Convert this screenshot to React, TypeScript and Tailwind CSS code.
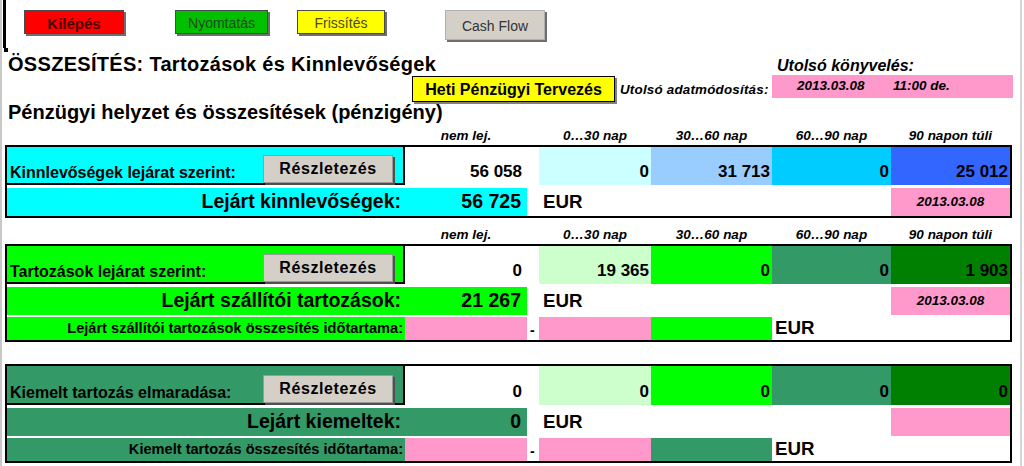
import React from 'react'

type Cell = { bg: string; v: string }

type SectionProps = {
    labelBg: string
    title: string
    nem: string
    cells: Cell[]
    totalLabel: string
    total: string
    date?: string
    period?: { label: string; bg: string }
    firstRowH: string
}

const widths = ['w-[112px]', 'w-[121px]', 'w-[119px]', 'w-[119px]']

function TopButton({ label, className, textClass }: { label: string; className: string; textClass: string }) {
    return (
        <div className={`flex items-center justify-center border border-[#4a4a4a] shadow-[2px_2px_0_#6e6e6e] ${className}`}>
            <span className={`pt-[2px] leading-none ${textClass}`}>{label}</span>
        </div>
    )
}

function DetailButton() {
    return (
        <div className="ml-auto mr-[10px] flex h-[28px] w-[130px] shrink-0 items-center justify-center border border-[#9a9a9a] bg-[#d4d0c8] shadow-[2px_2px_0_#505050]">
            <span className="text-[16px] font-bold leading-none tracking-[0.6px]">Részletezés</span>
        </div>
    )
}

function HeaderRow({ className }: { className: string }) {
    const heads = ['0…30 nap', '30…60 nap', '60…90 nap', '90 napon túli']
    return (
        <div className={`flex text-[13.5px] font-bold italic leading-[14px] ${className}`}>
            <div className="w-[405px] shrink-0" />
            <div className="w-[122px] shrink-0 text-center">nem lej.</div>
            <div className="w-[12px] shrink-0" />
            {heads.map((h, i) => (
                <div key={h} className={`${widths[i]} shrink-0 text-center`}>{h}</div>
            ))}
        </div>
    )
}

function Section({ labelBg, title, nem, cells, totalLabel, total, date, period, firstRowH }: SectionProps) {
    return (
        <div className="ml-[5px] w-[1007px] border-2 border-black">
            {/* lejárat szerinti bontás */}
            <div className={`flex ${firstRowH}`}>
                <div className={`flex w-[398px] shrink-0 items-end border-r-2 border-b-2 border-black pl-[3px] ${labelBg}`}>
                    <span className="pb-[1px] text-[16px] font-bold leading-[18px]">{title}</span>
                    <DetailButton />
                </div>
                <div className="flex w-[122px] shrink-0 items-end justify-end pr-[5px] pb-[4px] text-[17px] font-bold leading-[18px]">{nem}</div>
                <div className="w-[12px] shrink-0" />
                {cells.map((c, i) => (
                    <div key={i} className={`flex ${widths[i]} shrink-0 items-end justify-end pr-[2px] pb-[4px] text-[17px] font-bold leading-[18px] ${c.bg}`}>
                        {c.v}
                    </div>
                ))}
            </div>

            {/* lejárt összesen */}
            <div className="mt-[3px] flex h-[28px] items-center">
                <div className={`flex h-full w-[520px] shrink-0 items-center text-[19.5px] font-bold leading-none ${labelBg}`}>
                    <div className="w-[398px] shrink-0 pr-[4px] text-right">{totalLabel}</div>
                    <div className="w-[122px] shrink-0 pr-[6px] text-right">{total}</div>
                </div>
                <div className="w-[12px] shrink-0" />
                <div className="w-[112px] shrink-0 pl-[4px] text-[18.7px] font-bold leading-none">EUR</div>
                <div className="w-[121px] shrink-0" />
                <div className="w-[119px] shrink-0" />
                <div className="flex h-full w-[119px] shrink-0 items-center justify-center bg-[#ff99cc] text-[13.5px] font-bold italic">
                    {date}
                </div>
            </div>

            {/* összesítés időtartama */}
            {period && (
                <div className="mt-[2px] flex h-[23px] items-center">
                    <div className={`flex h-full w-[398px] shrink-0 items-center justify-end pr-[2px] text-[14.6px] font-bold leading-none ${labelBg}`}>
                        {period.label}
                    </div>
                    <div className="h-full w-[122px] shrink-0 bg-[#ff99cc]" />
                    <div className="w-[12px] shrink-0 pl-[3px] pt-[3px] text-[14px] font-bold leading-none">-</div>
                    <div className="h-full w-[112px] shrink-0 bg-[#ff99cc]" />
                    <div className={`h-full w-[121px] shrink-0 ${period.bg}`} />
                    <div className="w-[119px] shrink-0 pl-[3px] text-[18.7px] font-bold leading-none">EUR</div>
                    <div className="w-[119px] shrink-0" />
                </div>
            )}
        </div>
    )
}

export default function App() {
    return (
        <div className="relative h-[466px] w-[1024px] overflow-hidden bg-white font-['Liberation_Sans',Arial,sans-serif] text-black">
            {/* sheet edge marks */}
            <div className="absolute top-0 bottom-0 left-0 w-[2px] bg-[#c8c8c8]" />
            <div className="absolute top-0 left-[3px] h-[48px] w-[3px] bg-black" />
            <div className="absolute top-[48px] left-[4px] h-[4px] w-[4px] bg-black" />
            <div className="absolute top-0 right-[2px] bottom-0 w-[2px] bg-[#d4d4d4]" />

            {/* gombok */}
            <div className="flex h-[48px] items-start pt-[10px]">
                <TopButton label="Kilépés" className="ml-[24px] h-[24px] w-[100px] bg-[#ff0000]" textClass="text-[15px] font-bold text-[#4a0000]" />
                <TopButton label="Nyomtatás" className="ml-[51px] h-[24px] w-[93px] bg-[#00c000]" textClass="text-[14px] text-[#1d4a1d]" />
                <TopButton label="Frissítés" className="ml-[29px] h-[24px] w-[88px] bg-[#ffff00]" textClass="text-[14px] text-[#4d4a1a]" />
                <TopButton label="Cash Flow" className="ml-[60px] h-[30px] w-[100px] border-[#b0b0b0] bg-[#d4d0c8]" textClass="text-[14px] text-[#333333]" />
            </div>

            {/* cím */}
            <div className="flex h-[28px] items-start">
                <div className="ml-[8px] mt-[6px] w-[769px] shrink-0 text-[20px] font-bold leading-[20px] tracking-[0.3px]">
                    ÖSSZESÍTÉS: Tartozások és Kinnlevőségek
                </div>
                <div className="mt-[10px] text-[16px] font-bold italic leading-[16px]">Utolsó könyvelés:</div>
            </div>

            <div className="flex h-[26px] items-start">
                <div className="ml-[412px] flex h-[26px] w-[203px] shrink-0 items-center justify-center border border-black bg-[#ffff00] shadow-[2px_2px_0_#808080]">
                    <span className="pt-[2px] text-[16px] font-bold leading-none">Heti Pénzügyi Tervezés</span>
                </div>
                <div className="ml-[5px] mt-[7px] w-[152px] shrink-0 text-[13.4px] font-bold italic leading-[14px] tracking-[0.2px]">
                    Utolsó adatmódosítás:
                </div>
                <div className="-mt-[1px] flex h-[23px] w-[241px] shrink-0 items-center bg-[#ff99cc] text-[13.5px] font-bold italic">
                    <span className="ml-[25px] w-[96px]">2013.03.08</span>
                    <span>11:00 de.</span>
                </div>
            </div>

            <div className="ml-[8px] text-[20px] font-bold leading-[20px]">Pénzügyi helyzet és összesítések (pénzigény)</div>

            <HeaderRow className="h-[23px] pt-[7px]" />
            <Section
                labelBg="bg-[#00ffff]"
                title="Kinnlevőségek lejárat szerint:"
                nem="56 058"
                cells={[
                    { bg: 'bg-[#ccffff]', v: '0' },
                    { bg: 'bg-[#99ccff]', v: '31 713' },
                    { bg: 'bg-[#00ccff]', v: '0' },
                    { bg: 'bg-[#3366ff]', v: '25 012' },
                ]}
                totalLabel="Lejárt kinnlevőségek:"
                total="56 725"
                date="2013.03.08"
                firstRowH="h-[38px]"
            />

            <HeaderRow className="h-[26px] pt-[10px]" />
            <Section
                labelBg="bg-[#00ff00]"
                title="Tartozások lejárat szerint:"
                nem="0"
                cells={[
                    { bg: 'bg-[#ccffcc]', v: '19 365' },
                    { bg: 'bg-[#00ff00]', v: '0' },
                    { bg: 'bg-[#339966]', v: '0' },
                    { bg: 'bg-[#008000]', v: '1 903' },
                ]}
                totalLabel="Lejárt szállítói tartozások:"
                total="21 267"
                date="2013.03.08"
                period={{ label: 'Lejárt szállítói tartozások összesítés időtartama:', bg: 'bg-[#00ff00]' }}
                firstRowH="h-[38px]"
            />

            <div className="h-[22px]" />
            <Section
                labelBg="bg-[#339966]"
                title="Kiemelt tartozás elmaradása:"
                nem="0"
                cells={[
                    { bg: 'bg-[#ccffcc]', v: '0' },
                    { bg: 'bg-[#00ff00]', v: '0' },
                    { bg: 'bg-[#339966]', v: '0' },
                    { bg: 'bg-[#008000]', v: '0' },
                ]}
                totalLabel="Lejárt kiemeltek:"
                total="0"
                period={{ label: 'Kiemelt tartozás összesítés időtartama:', bg: 'bg-[#339966]' }}
                firstRowH="h-[39px]"
            />
        </div>
    )
}
